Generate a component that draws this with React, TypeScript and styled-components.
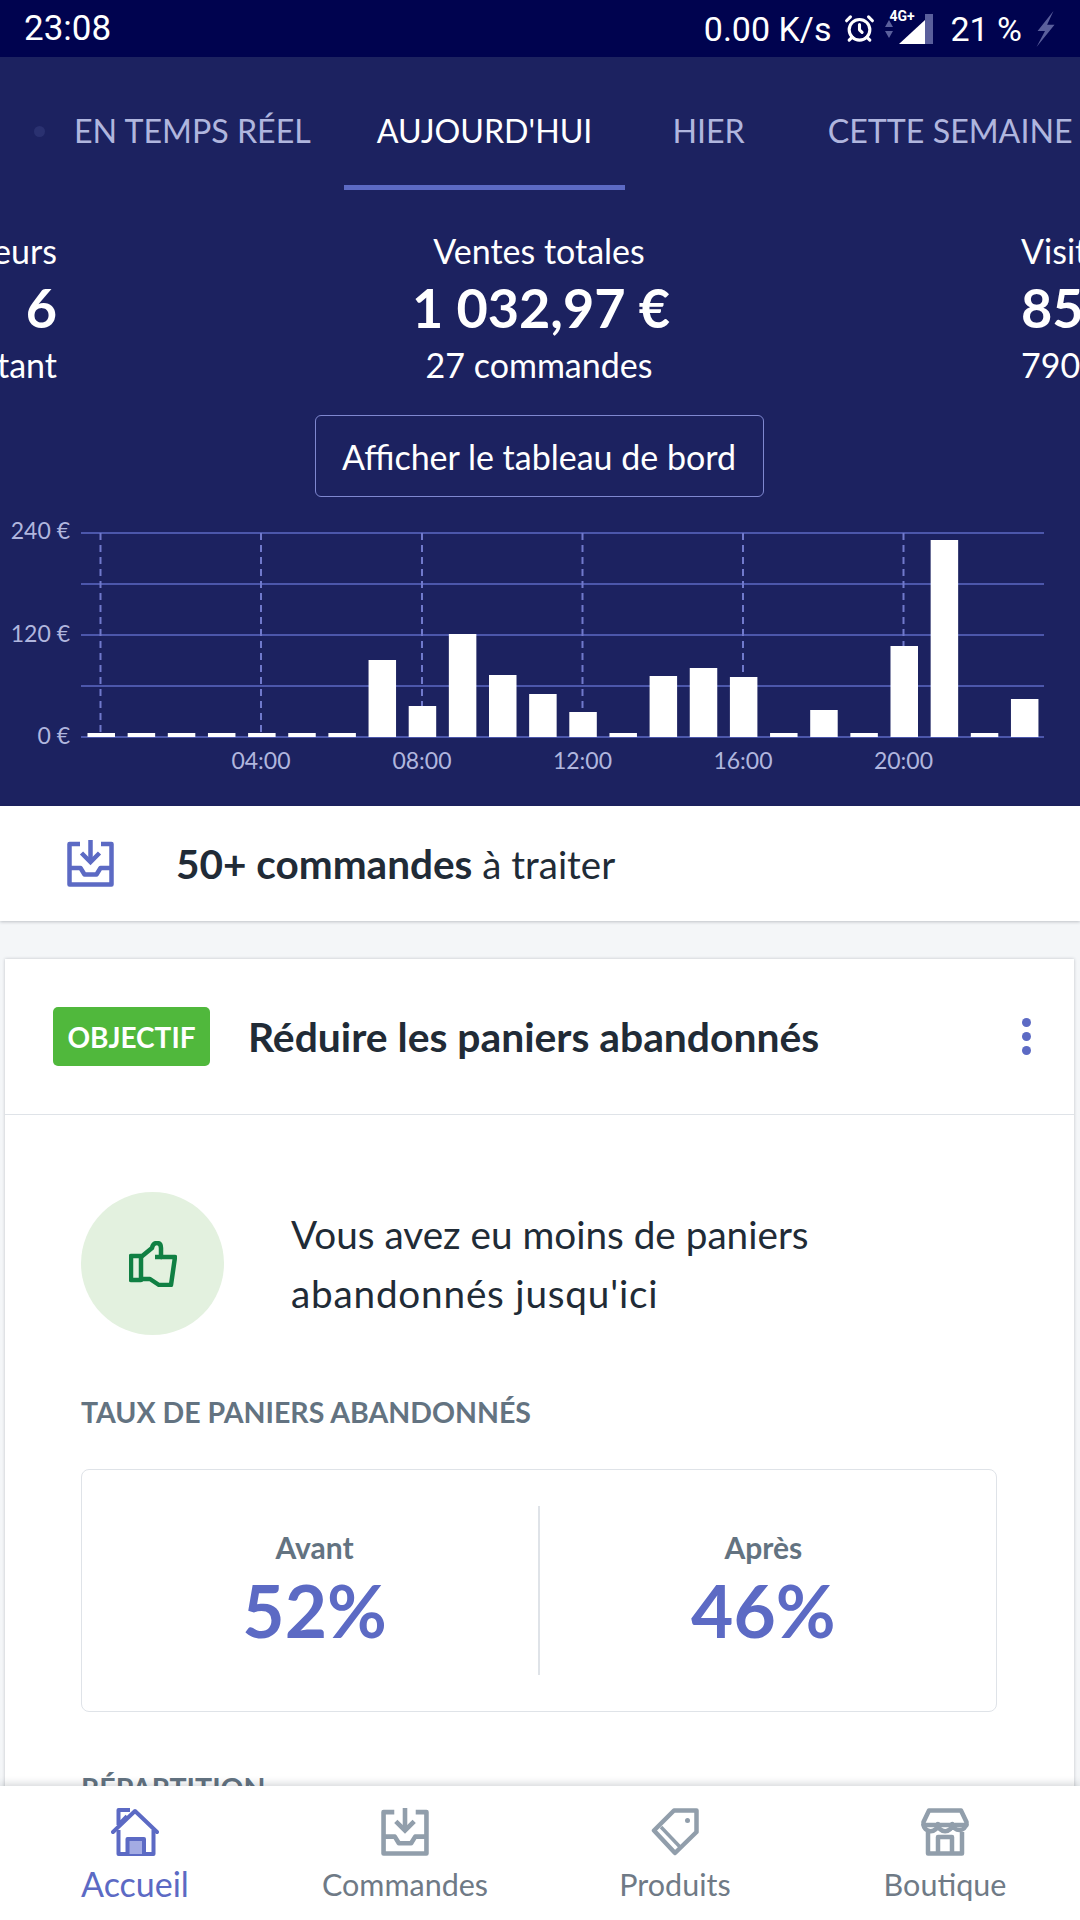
import React from 'react';
import styled, { createGlobalStyle } from 'styled-components';
import { AlarmClock } from 'lucide-react';

const GlobalStyle = createGlobalStyle`
  html, body {
    margin: 0;
    padding: 0;
    background: #f4f6f8;
    font-family: Lato, "Noto Sans", sans-serif;
  }
  * {
    box-sizing: border-box;
  }
`;

const BAR_VALUES = [4, 4, 4, 4, 4, 4, 4, 77, 31, 103, 62, 43, 25, 4, 61, 69, 60, 4, 27, 4, 91, 197, 4, 38];
const HOUR_MARKS = [
  { x: 100.5 },
  { x: 261, label: '04:00' },
  { x: 422, label: '08:00' },
  { x: 582.5, label: '12:00' },
  { x: 743, label: '16:00' },
  { x: 903.5, label: '20:00' },
];
const GRID_LINES = [23, 74, 125, 176, 227];

const SalesChart = () => (
  <ChartSvg viewBox="0 0 1080 296">
    {GRID_LINES.map((y) => (
      <line key={y} x1={81} x2={1044} y1={y} y2={y} stroke="#5c6ac4" strokeWidth={1.7} />
    ))}
    {HOUR_MARKS.map((mark) => (
      <line
        key={mark.x}
        x1={mark.x}
        x2={mark.x}
        y1={23}
        y2={227}
        stroke="#7079cc"
        strokeWidth={2}
        strokeDasharray="7 5"
      />
    ))}
    {BAR_VALUES.map((value, i) => (
      <rect key={i} x={87.5 + i * 40.15} y={227 - value} width={27.5} height={value} fill="#ffffff" />
    ))}
    <AxisText x={70} y={29} textAnchor="end">240 €</AxisText>
    <AxisText x={70} y={132} textAnchor="end">120 €</AxisText>
    <AxisText x={70} y={234} textAnchor="end">0 €</AxisText>
    {HOUR_MARKS.filter((mark) => mark.label).map((mark) => (
      <AxisText key={mark.x} x={mark.x} y={259} textAnchor="middle">
        {mark.label}
      </AxisText>
    ))}
  </ChartSvg>
);

const InboxIcon = ({ color, size }: { color: string; size: number }) => (
  <svg width={size} height={size} viewBox="0 0 47 47" fill="none" stroke={color} strokeWidth={4.5}>
    <path d="M13 4 H2.5 V44.5 H44.5 V4 H34" strokeLinejoin="round" />
    <path d="M2.5 28 H13.5 L17.5 34.5 H29.5 L33.5 28 H44.5" strokeLinejoin="round" />
    <path d="M23.5 0 V20" />
    <path d="M14.5 13 L23.5 22 L32.5 13" />
  </svg>
);

const HomeIcon = () => (
  <svg width={48} height={48} viewBox="0 0 48 48" fill="none" stroke="#5c6ac4" strokeWidth={4} strokeLinejoin="round">
    <path d="M2 24 L24 3 L46 24" strokeLinecap="round" />
    <path d="M7.5 22 V46 H42.5 V22" />
    <path d="M7.5 17 V2 H19 M16 8 L7.5 17" />
    <path d="M16.5 46 V31 H33 V46" fill="#a3abe3" />
  </svg>
);

const TagIcon = () => (
  <svg width={48} height={48} viewBox="0 0 48 48" fill="none" stroke="#919eab" strokeWidth={4.5} strokeLinejoin="round">
    <path d="M23 2.5 H45.5 V24 L24 45 L3 22.5 Z" />
    <path d="M10 19 L29.5 39.5" strokeWidth={3.5} />
    <circle cx={36.5} cy={12.5} r={2.5} fill="#919eab" stroke="none" />
  </svg>
);

const StoreIcon = () => (
  <svg width={48} height={48} viewBox="0 0 48 48" fill="none" stroke="#919eab" strokeWidth={4.5} strokeLinejoin="round">
    <path d="M8 2.5 H40 L45.5 14 V17 H2.5 V14 Z" />
    <path d="M2.5 16 a7.2 7.2 0 0 0 14.4 0 a7.2 7.2 0 0 0 14.4 0 a7.2 7.2 0 0 0 14.2 0" />
    <path d="M7 24 V45.5 H41 V24" />
    <path d="M17 45.5 V29 H31 V45.5" />
  </svg>
);

const ThumbIcon = () => (
  <svg width={48} height={46} viewBox="0 0 48 46" fill="none" stroke="#108043" strokeWidth={4.5} strokeLinejoin="round">
    <path d="M2 15 H12 V39 H2 Z" />
    <path d="M12 16 L23 7 Q24 2 28 2 Q32 2 32 7 V16 H46 L42 44 H30 L21 38 H12" />
    <path d="M26 16 H33" />
  </svg>
);

const App = () => (
  <Screen>
    <GlobalStyle />
    <StatusBar>
      <StatusTime>23:08</StatusTime>
      <StatusRight>
        <StatusText>0.00 K/s</StatusText>
        <AlarmClock size={31} color="#ffffff" strokeWidth={2.4} />
        <DataArrows viewBox="0 0 10 20" width={10} height={20}>
          <path d="M5 1 L9 8 H1 Z M5 19 L1 12 H9 Z" fill="#5a5f9c" />
        </DataArrows>
        <SignalWrap>
          <svg width={34} height={32} viewBox="0 0 34 32">
            <path d="M0 31 L26 7 V31 Z" fill="#ffffff" />
            <path d="M26 1 L34 1 V31 H26 Z" fill="#5a5f9c" />
          </svg>
          <NetworkLabel>4G+</NetworkLabel>
        </SignalWrap>
        <BatteryText>21 %</BatteryText>
        <BoltIcon width={22} height={36} viewBox="0 0 20 34">
          <path d="M18 0 L3 19 H10 L2 34 L19 13 H12 Z" fill="#5a5f9c" />
        </BoltIcon>
      </StatusRight>
    </StatusBar>

    <Main>
      <Header>
        <Tabs>
          <LiveDot />
          <Tab>EN TEMPS RÉEL</Tab>
          <Tab $active>AUJOURD'HUI</Tab>
          <Tab $spaced>HIER</Tab>
          <Tab>CETTE SEMAINE</Tab>
        </Tabs>

        <Metrics>
          <SideMetric $align="flex-end">
            <MetricLabel>Visiteurs</MetricLabel>
            <MetricValue>6</MetricValue>
            <MetricLabel>à cet instant</MetricLabel>
          </SideMetric>
          <CenterMetric>
            <MetricLabel>Ventes totales</MetricLabel>
            <CenterValue>1 032,97 €</CenterValue>
            <MetricLabel>27 commandes</MetricLabel>
          </CenterMetric>
          <SideMetric $align="flex-start">
            <MetricLabel>Visites</MetricLabel>
            <MetricValue>85</MetricValue>
            <MetricLabel>790 visiteurs</MetricLabel>
          </SideMetric>
        </Metrics>

        <DashboardButton>Afficher le tableau de bord</DashboardButton>
        <SalesChart />
      </Header>

      <OrdersRow>
        <InboxIcon color="#5c6ac4" size={47} />
        <OrdersText>
          <strong>50+ commandes</strong> à traiter
        </OrdersText>
      </OrdersRow>

      <Card>
        <CardHeader>
          <Badge>OBJECTIF</Badge>
          <CardTitle>Réduire les paniers abandonnés</CardTitle>
          <MoreDots>
            <i />
            <i />
            <i />
          </MoreDots>
        </CardHeader>
        <CardBody>
          <Message>
            <ThumbCircle>
              <ThumbIcon />
            </ThumbCircle>
            <MessageText>
              Vous avez eu moins de paniers
              <br />
              <SecondLine>abandonnés jusqu'ici</SecondLine>
            </MessageText>
          </Message>
          <SectionLabel>TAUX DE PANIERS ABANDONNÉS</SectionLabel>
          <RateBox>
            <RateCell>
              <RateLabel>Avant</RateLabel>
              <RateValue>52%</RateValue>
            </RateCell>
            <RateDivider />
            <RateCell>
              <RateLabel>Après</RateLabel>
              <RateValue>46%</RateValue>
            </RateCell>
          </RateBox>
          <NextLabel>RÉPARTITION</NextLabel>
        </CardBody>
      </Card>
    </Main>

    <BottomNav>
      <NavItem $active>
        <HomeIcon />
        <span>Accueil</span>
      </NavItem>
      <NavItem>
        <InboxIcon color="#919eab" size={48} />
        <span>Commandes</span>
      </NavItem>
      <NavItem>
        <TagIcon />
        <span>Produits</span>
      </NavItem>
      <NavItem>
        <StoreIcon />
        <span>Boutique</span>
      </NavItem>
    </BottomNav>
  </Screen>
);

const Screen = styled.div`
  width: 1080px;
  height: 1920px;
  display: flex;
  flex-direction: column;
  overflow: hidden;
  background: #f4f6f8;
`;

const StatusBar = styled.div`
  height: 57px;
  flex: none;
  display: flex;
  align-items: center;
  justify-content: space-between;
  padding: 0 24px;
  background: #00034f;
  color: #ffffff;
  font-family: Roboto, sans-serif;
`;

const StatusTime = styled.span`
  font-size: 35px;
`;

const StatusRight = styled.div`
  display: flex;
  align-items: center;
`;

const StatusText = styled.span`
  font-size: 34px;
  margin-right: 13px;
`;

const BatteryText = styled(StatusText)`
  margin: 0 12px 0 17px;
`;

const BoltIcon = styled.svg`
  flex: none;
`;

const DataArrows = styled.svg`
  margin: 0 5px 0 9px;
`;

const SignalWrap = styled.div`
  position: relative;
  width: 34px;
  height: 32px;
`;

const NetworkLabel = styled.span`
  position: absolute;
  left: -10px;
  top: -5px;
  font-size: 14px;
  font-weight: 700;
`;

const Main = styled.div`
  flex: 1;
  min-height: 0;
  overflow: hidden;
`;

const Header = styled.div`
  height: 749px;
  display: flex;
  flex-direction: column;
  align-items: center;
  background: #1c2260;
  color: #ffffff;
`;

const Tabs = styled.div`
  position: relative;
  width: 100%;
  height: 133px;
  display: flex;
  padding-left: 41px;
`;

const LiveDot = styled.span`
  position: absolute;
  left: 34px;
  top: 69px;
  width: 11px;
  height: 11px;
  border-radius: 50%;
  background: #2a3170;
`;

const Tab = styled.div<{ $active?: boolean; $spaced?: boolean }>`
  flex: none;
  height: 133px;
  padding: 54px 33px 0;
  margin: ${(p) => (p.$spaced ? '0 17px 0 14px' : '0')};
  font-size: 32.2px;
  line-height: 40px;
  white-space: nowrap;
  color: ${(p) => (p.$active ? '#ffffff' : '#b0b6de')};
  border-bottom: 5px solid ${(p) => (p.$active ? '#5c6ac4' : 'transparent')};
`;

const Metrics = styled.div`
  width: 100%;
  display: grid;
  grid-template-columns: 57px 1fr 59px;
  padding-top: 41px;
`;

const SideMetric = styled.div<{ $align: string }>`
  display: flex;
  flex-direction: column;
  align-items: ${(p) => p.$align};
  white-space: nowrap;
`;

const CenterMetric = styled.div`
  display: flex;
  flex-direction: column;
  align-items: center;
  white-space: nowrap;
`;

const MetricLabel = styled.div`
  font-size: 34px;
  line-height: 40px;
`;

const MetricValue = styled.div`
  font-size: 54px;
  font-weight: 700;
  line-height: 74px;
`;

const CenterValue = styled(MetricValue)`
  margin-left: 4px;
`;

const DashboardButton = styled.button`
  width: 449px;
  height: 82px;
  margin: 30px 2px 0 0;
  flex: none;
  background: transparent;
  border: 1.5px solid #7f88d0;
  border-radius: 6px;
  color: #ffffff;
  font-family: inherit;
  font-size: 34px;
`;

const ChartSvg = styled.svg`
  width: 1080px;
  height: 296px;
  margin-top: 13px;
  flex: none;
  display: block;
`;

const AxisText = styled.text`
  fill: #b0b6de;
  font-size: 23px;
`;

const OrdersRow = styled.div`
  height: 115px;
  display: flex;
  align-items: center;
  gap: 62px;
  padding-left: 67px;
  background: #ffffff;
  box-shadow: 0 1px 3px rgba(33, 43, 54, 0.25);
`;

const OrdersText = styled.div`
  font-size: 38.5px;
  color: #212b36;

  strong {
    font-size: 40.5px;
    font-weight: 700;
  }
`;

const Card = styled.div`
  margin: 38px 6px 0 5px;
  background: #ffffff;
  box-shadow: 0 0 3px rgba(33, 43, 54, 0.25);
`;

const CardHeader = styled.div`
  height: 156px;
  display: flex;
  align-items: center;
  padding: 0 43px 0 48px;
  border-bottom: 1.5px solid #dfe3e8;
`;

const Badge = styled.div`
  width: 157px;
  height: 59px;
  display: flex;
  align-items: center;
  justify-content: center;
  border-radius: 5px;
  background: #50b83c;
  color: #ffffff;
  font-size: 28px;
  font-weight: 700;
`;

const CardTitle = styled.div`
  flex: 1;
  margin-left: 38px;
  font-size: 40.8px;
  font-weight: 700;
  color: #212b36;
`;

const MoreDots = styled.div`
  display: flex;
  flex-direction: column;
  gap: 5px;

  i {
    width: 9px;
    height: 9px;
    border-radius: 50%;
    background: #5c6ac4;
  }
`;

const CardBody = styled.div`
  padding: 77px 77px 0 76px;
`;

const Message = styled.div`
  display: flex;
  align-items: center;
  gap: 67px;
`;

const ThumbCircle = styled.div`
  width: 143px;
  height: 143px;
  flex: none;
  display: flex;
  align-items: center;
  justify-content: center;
  border-radius: 50%;
  background: #e3f1df;
`;

const MessageText = styled.div`
  font-size: 38.7px;
  line-height: 59px;
  color: #212b36;
`;

const SecondLine = styled.span`
  letter-spacing: 0.8px;
`;

const SectionLabel = styled.div`
  margin-top: 59px;
  font-size: 28.5px;
  line-height: 36px;
  font-weight: 700;
  color: #637381;
`;

const RateBox = styled.div`
  height: 243px;
  margin-top: 39px;
  padding: 0 9px;
  display: flex;
  align-items: center;
  border: 1.5px solid #dfe3e8;
  border-radius: 8px;
`;

const RateCell = styled.div`
  flex: 1;
  display: flex;
  flex-direction: column;
  align-items: center;
`;

const RateDivider = styled.div`
  width: 1.5px;
  height: 169px;
  background: #dfe3e8;
`;

const RateLabel = styled.div`
  font-size: 30px;
  line-height: 34px;
  font-weight: 700;
  color: #637381;
`;

const RateValue = styled.div`
  margin-top: 4px;
  font-size: 73px;
  line-height: 84px;
  font-weight: 700;
  color: #5c6ac4;
`;

const NextLabel = styled(SectionLabel)`
  margin-top: 58px;
`;

const BottomNav = styled.nav`
  position: relative;
  height: 134px;
  flex: none;
  display: grid;
  grid-template-columns: repeat(4, 1fr);
  background: #ffffff;
  box-shadow: 0 -2px 8px rgba(33, 43, 54, 0.2);
`;

const NavItem = styled.div<{ $active?: boolean }>`
  display: flex;
  flex-direction: column;
  align-items: center;
  gap: 9px;
  padding-top: 22px;
  font-size: ${(p) => (p.$active ? '34px' : '30.5px')};
  line-height: 38px;
  color: ${(p) => (p.$active ? '#5c6ac4' : '#6f7a86')};
`;

export default App;
